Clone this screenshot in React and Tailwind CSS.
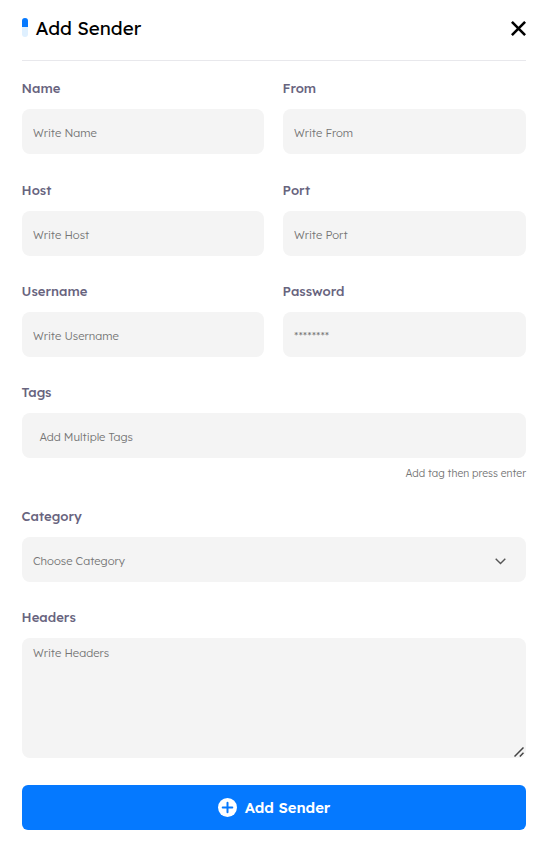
import React from "react";

const box = "w-full rounded-lg bg-[#f4f4f4] text-[11.25px] font-light text-[#757575] placeholder:text-[#757575] placeholder:opacity-100 outline-none";

function Field({ label, children }) {
  return (
    <div className="min-w-0">
      <label className="mb-[11px] -ml-[0.4px] block h-[19px] text-[13.12px] leading-[19px] font-medium whitespace-nowrap text-[#68647e]">
        {label}
      </label>
      {children}
    </div>
  );
}

function TextInput({ placeholder, className = "px-[11px]" }) {
  return <input placeholder={placeholder} className={`${box} block h-[45px] pt-[3px] ${className}`} />;
}

export default function App() {
  return (
    <div className="h-[848px] w-[547px] overflow-hidden bg-white pr-[21px] pl-[22px] font-['Lexend','Inter',sans-serif]">
      <header className="flex h-[61px] items-center justify-between border-b border-[#e8e8ec] pb-1">
        <div className="flex items-center gap-[7.5px]">
          <span className="mb-0.5 block h-[19px] w-1.5 overflow-hidden rounded-[3px] bg-[#dff0ff]">
            <span className="block h-[9px] bg-[#0579ff]" />
          </span>
          <h1 className="pb-px text-[18.7px] leading-6 font-normal text-black">Add Sender</h1>
        </div>
        <button aria-label="Close">
          <svg className="mt-px" width="15" height="15" viewBox="0 0 15 15" fill="none" stroke="#000" strokeWidth="2.6">
            <path d="M.9.9 14.1 14.1M14.1.9.9 14.1" />
          </svg>
        </button>
      </header>

      <form className="pt-[18px]">
        <div className="mb-[27px] grid grid-cols-[242px_243px] gap-x-[19px]">
          <Field label="Name"><TextInput placeholder="Write Name" /></Field>
          <Field label="From"><TextInput placeholder="Write From" /></Field>
        </div>
        <div className="mb-[26px] grid grid-cols-[242px_243px] gap-x-[19px]">
          <Field label="Host"><TextInput placeholder="Write Host" /></Field>
          <Field label="Port"><TextInput placeholder="Write Port" /></Field>
        </div>
        <div className="mb-[26px] grid grid-cols-[242px_243px] gap-x-[19px]">
          <Field label="Username"><TextInput placeholder="Write Username" /></Field>
          <Field label="Password"><TextInput placeholder="********" /></Field>
        </div>
        <Field label="Tags">
          <TextInput placeholder="Add Multiple Tags" className="pr-[11px] pl-[17.4px]" />
          <p className="mb-6 flex h-[25px] items-end justify-end text-[10.35px] leading-[18px] font-light text-[#757575]">
            <span>Add tag then press enter</span>
          </p>
        </Field>
        <Field label="Category">
          <div className={`${box} mb-[26px] flex h-[45px] items-center justify-between pr-5 pl-[11px]`}>
            <span className="pt-[3px]">Choose Category</span>
            <svg className="mt-1" width="11" height="7" viewBox="0 0 11 7" fill="none" stroke="#555" strokeWidth="1.4">
              <path d="m.7.8 4.8 4.8L10.3.8" />
            </svg>
          </div>
        </Field>
        <Field label="Headers">
          <div className="relative">
            <textarea placeholder="Write Headers" className={`${box} block h-[120px] resize-none px-[11px] pt-[7px] leading-4`} />
            <svg className="absolute right-0.5 bottom-px" width="10" height="10" viewBox="0 0 10 10" stroke="#444" strokeWidth="1.5">
              <path d="M.5 9.5 9.5.5M5.8 9.5 9.5 5.8" />
            </svg>
          </div>
        </Field>
        <button type="button" className="mt-[27px] flex h-[45px] w-full items-center justify-center gap-2 rounded-md bg-[#0579ff] text-[14.8px] font-semibold text-white">
          <svg width="19" height="19" viewBox="0 0 19 19">
            <circle cx="9.5" cy="9.5" r="9.5" fill="#fff" />
            <path d="M9.5 4.7v9.6M4.7 9.5h9.6" stroke="#0579ff" strokeWidth="2" strokeLinecap="round" />
          </svg>
          <span className="pt-px">Add Sender</span>
        </button>
      </form>
    </div>
  );
}
